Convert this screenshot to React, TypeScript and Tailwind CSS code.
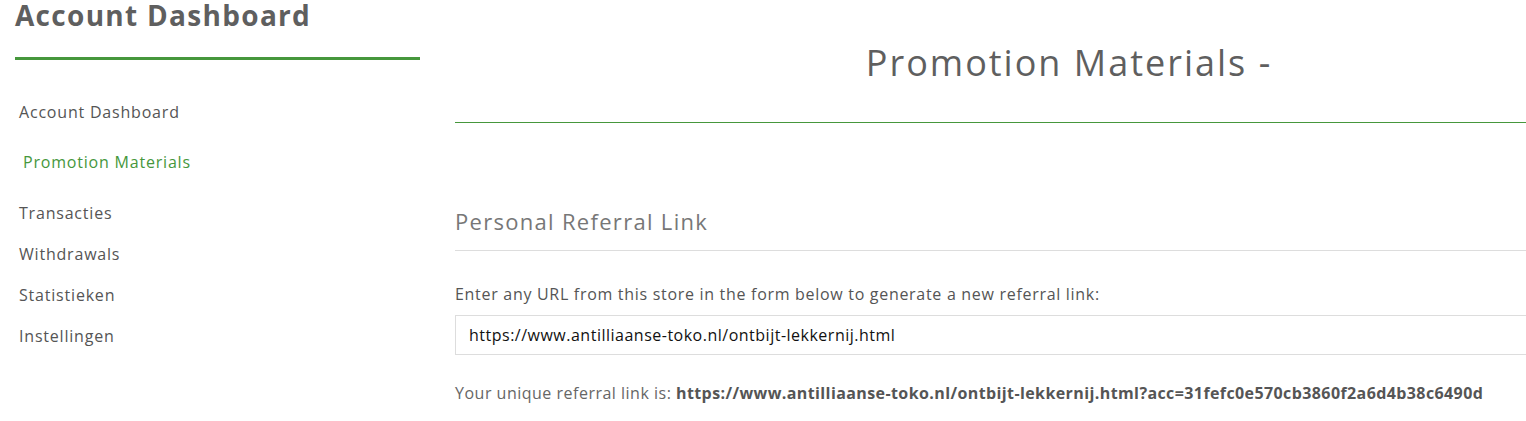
const sideLinks = [
  { label: "Account Dashboard", active: false },
  { label: "Promotion Materials", active: true },
  { label: "Transacties", active: false },
  { label: "Withdrawals", active: false },
  { label: "Statistieken", active: false },
  { label: "Instellingen", active: false },
];

export default function App() {
  return (
    <div
      className="flex h-[421px] w-[1526px] overflow-hidden bg-white text-[#555]"
      style={{ fontFamily: '"Open Sans", "Noto Sans", sans-serif' }}
    >
      <aside className="ml-[15px] w-[405px] shrink-0">
        <h1 className="text-[28px] font-bold leading-[30px] tracking-[1.3px] text-[#5f5f5f]">
          Account Dashboard
        </h1>
        <div className="mt-[27px] h-[3px] bg-[#46973c]" />
        <nav className="mt-[40px] flex flex-col text-[16px] leading-[24px] tracking-[0.8px]">
          {sideLinks.map((link, i) => (
            <a
              key={link.label}
              className={
                link.active
                  ? "mt-[26px] pl-[8px] text-[#46973c]"
                  : i === 0
                    ? "pl-[4px] text-[#555]"
                    : i === 2
                      ? "mt-[27px] pl-[4px] text-[#555]"
                      : "mt-[17px] pl-[4px] text-[#555]"
              }
            >
              {link.label}
            </a>
          ))}
        </nav>
      </aside>

      <main className="ml-[35px] w-[1228px] shrink-0">
        <h2 className="mt-[40px] text-center text-[36px] font-normal leading-[46px] tracking-[2px] text-[#5f5f5f]">
          Promotion Materials -
        </h2>
        <div className="mt-[36px] h-px bg-[#46973c]" />

        <h3 className="mt-[83px] text-[22px] font-normal leading-[30px] tracking-[1.3px] text-[#777]">
          Personal Referral Link
        </h3>
        <div className="mt-[14px] h-px bg-[#ddd]" />

        <p className="mt-[31px] text-[16px] leading-[24px] tracking-[0.7px] text-[#555]">
          Enter any URL from this store in the form below to generate a new referral link:
        </p>
        <input
          readOnly
          value="https://www.antilliaanse-toko.nl/ontbijt-lekkernij.html"
          className="mt-[9px] h-[40px] w-full border border-[#ddd] px-[13px] text-[16px] tracking-[0.5px] text-[#111] outline-none"
        />
        <p className="mt-[26px] text-[16px] leading-[24px] tracking-[0.5px] text-[#666]">
          Your unique referral link is:{" "}
          <strong className="font-bold tracking-[0.4px] text-[#555]">
            https://www.antilliaanse-toko.nl/ontbijt-lekkernij.html?acc=31fefc0e570cb3860f2a6d4b38c6490d
          </strong>
        </p>
      </main>
    </div>
  );
}
